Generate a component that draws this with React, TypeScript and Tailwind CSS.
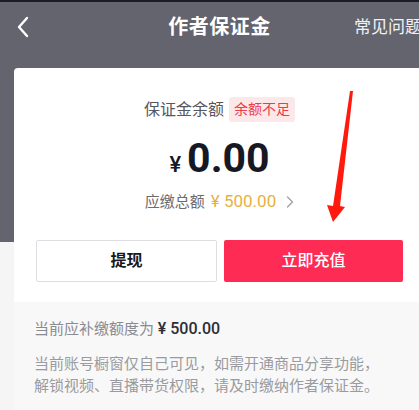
export default function App() {
  return (
    <div className="relative h-[410px] w-[419px] overflow-hidden bg-[#f5f5f6] font-['Roboto','Noto_Sans_CJK_SC',sans-serif]">
      <div className="w-[439px] bg-[linear-gradient(to_bottom,#1b1c2a_0px,#1b1c2a_2px,#64646f_2px,#64646f_242px,#f5f5f6_242px)]">
        {/* Header */}
        <div className="relative flex h-[54px] items-center justify-center">
          <svg className="absolute left-[16px] top-[16px]" width="14" height="22" viewBox="0 0 14 22" fill="none">
            <path d="M11 2 L3 11 L11 20" stroke="#ffffff" strokeWidth="2.4" strokeLinecap="round" strokeLinejoin="round" />
          </svg>
          <h1 className="text-[20px] font-bold tracking-[0.5px] text-white">作者保证金</h1>
          <span className="absolute right-[17px] top-[15px] text-[17px] text-[#f1f1f4]">常见问题</span>
        </div>

        {/* Card */}
        <div className="ml-[14px] mt-[14px] w-[411px] overflow-hidden rounded-t-[4px] bg-white">
          <div className="flex flex-col items-center pt-[29px]">
            <div className="flex items-center gap-[5px]">
              <span className="text-[16px] text-[#55565e]">保证金余额</span>
              <span className="rounded-[3px] bg-[#fde8e9] px-[5px] py-[2px] text-[14px] leading-[21px] text-[#ee3b45]">余额不足</span>
            </div>
            <div className="mt-[10px] flex items-baseline">
              <span className="mr-[6px] text-[22px] font-medium text-[#161823]">¥</span>
              <span className="text-[41px] font-bold leading-[52px] text-[#161823]">0.00</span>
            </div>
            <div className="mt-[5px] flex items-center">
              <span className="text-[15px] text-[#6b6c72]">应缴总额</span>
              <span className="ml-[6px] text-[17px] text-[#e6b23f]">¥ 500.00</span>
              <svg className="ml-[10px]" width="8" height="12" viewBox="0 0 8 12" fill="none">
                <path d="M1.5 1 L6.5 6 L1.5 11" stroke="#a2a3a8" strokeWidth="1.4" strokeLinecap="round" strokeLinejoin="round" />
              </svg>
            </div>
          </div>
          <div className="mt-[25px] flex gap-[7px] px-[22px] pb-[20px]">
            <button className="flex h-[42px] flex-1 items-center justify-center rounded-[2px] border border-[#dedee2] bg-white text-[16px] font-bold text-[#161823]">
              提现
            </button>
            <button className="flex h-[42px] flex-1 items-center justify-center rounded-[2px] bg-[#fe2c55] text-[16px] font-medium text-white">
              立即充值
            </button>
          </div>
          <div className="bg-[#f8f8f8] px-[20px] pb-[20px] pt-[16px]">
            <p className="text-[15px] leading-[22px] text-[#8a8b91]">
              当前应补缴额度为 <span className="text-[16px] font-medium text-[#2c2d35]">¥ 500.00</span>
            </p>
            <p className="mt-[13px] text-[15px] leading-[22px] text-[#9a9ba0]">
              当前账号橱窗仅自己可见，如需开通商品分享功能，
              <br />
              解锁视频、直播带货权限，请及时缴纳作者保证金。
            </p>
          </div>
        </div>
      </div>

      {/* Red annotation arrow */}
      <svg className="pointer-events-none absolute left-0 top-0" width="419" height="410" viewBox="0 0 419 410">
        <polygon points="350,91 353,91 340,206 345,207 333,222 327,205 333,206" fill="#ff1a0d" />
      </svg>
    </div>
  )
}
